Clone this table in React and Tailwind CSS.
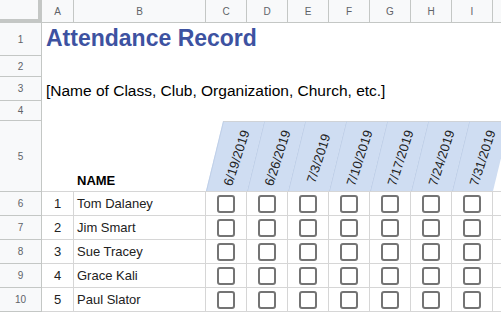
import React from 'react'

const cols = ['A', 'B', 'C', 'D', 'E', 'F', 'G', 'H', 'I', '']
const dates = ['6/19/2019', '6/26/2019', '7/3/2019', '7/10/2019', '7/17/2019', '7/24/2019', '7/31/2019']
const people = ['Tom Dalaney', 'Jim Smart', 'Sue Tracey', 'Grace Kali', 'Paul Slator']

function RowHead({ n }) {
  return (
    <div className="bg-[#f8f9fa] border-r border-b border-[#c4c7c5] flex items-center justify-center text-[10px] text-[#5f6368]">
      {n}
    </div>
  )
}

function Checkbox() {
  return <div className="w-[18px] h-[18px] border-2 border-[#747474] rounded-[3px]" />
}

export default function App() {
  return (
    <div className="w-[501px] h-[312px] overflow-hidden bg-white font-['Liberation_Sans',Arial,sans-serif] text-[#222]">
      <div className="grid grid-cols-[42px_32px_132px_repeat(7,41px)_60px] grid-rows-[23px_33px_21px_24px_20px_71px_repeat(5,24px)]">
        {/* column letters */}
        <div className="bg-[#f8f9fa] border-r-4 border-b-4 border-[#c4c7c5]" />
        {cols.map((c, i) => (
          <div
            key={i}
            className="bg-[#f8f9fa] border-r border-b border-[#c4c7c5] flex items-center justify-center text-[10px] text-[#5f6368]"
          >
            {c}
          </div>
        ))}

        {/* row 1: title */}
        <RowHead n={1} />
        <div className="col-span-10 flex items-start pt-px pl-[4px] text-[23px] leading-[28px] font-bold text-[#3d52a1] whitespace-nowrap">
          Attendance Record
        </div>

        {/* row 2 */}
        <RowHead n={2} />
        <div className="col-span-10" />

        {/* row 3: subtitle */}
        <RowHead n={3} />
        <div className="col-span-10 flex items-end pb-px pl-[4px] text-[15.5px] leading-[19px] text-black whitespace-nowrap">
          [Name of Class, Club, Organization, Church, etc.]
        </div>

        {/* row 4 */}
        <RowHead n={4} />
        <div className="col-span-10" />

        {/* row 5: headings */}
        <RowHead n={5} />
        <div className="border-b border-[#d6d6d6]" />
        <div className="border-b border-[#d6d6d6] flex items-end pb-[2px] pl-[3px] text-[13px] leading-[16px] font-bold text-black">
          NAME
        </div>
        {dates.map((d) => (
          <div key={d} className="grid border-b border-[#d6d6d6]">
            <div className="[grid-area:1/1] skew-x-[-13.75deg] origin-bottom bg-[#cfddf2] border-t border-l border-t-[#cfd2d6] border-l-[#bfcfe8]" />
            <div className="[grid-area:1/1] flex items-center justify-center">
              <span className="translate-x-[10px] translate-y-[2px] rotate-[198deg] [writing-mode:vertical-rl] whitespace-nowrap text-[13px] leading-[15px]">
                {d}
              </span>
            </div>
          </div>
        ))}
        <div className="border-b border-[#d6d6d6]" />

        {/* attendance rows */}
        {people.map((p, i) => (
          <React.Fragment key={p}>
            <RowHead n={i + 6} />
            <div className="border-r border-b border-[#d6d6d6] flex items-center justify-center text-[13px]">
              {i + 1}
            </div>
            <div className="border-r border-b border-[#d6d6d6] flex items-center pl-[3px] text-[13px] whitespace-nowrap">
              {p}
            </div>
            {dates.map((d) => (
              <div key={d} className="border-r border-b border-[#d6d6d6] flex items-center justify-center">
                <Checkbox />
              </div>
            ))}
            <div className="border-r border-b border-[#d6d6d6]" />
          </React.Fragment>
        ))}
      </div>
    </div>
  )
}
